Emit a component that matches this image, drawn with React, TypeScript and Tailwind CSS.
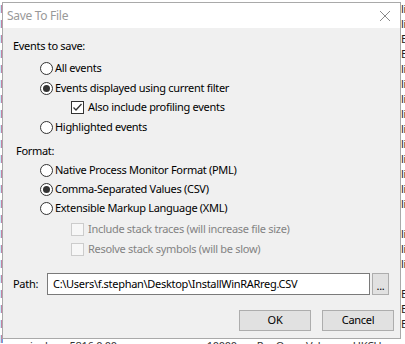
import React from "react";

const font = { fontFamily: '"Noto Sans", "Segoe UI", Arial, sans-serif' };

function Radio({ checked }: { checked?: boolean }) {
  return (
    <span className="flex h-[13px] w-[13px] shrink-0 items-center justify-center rounded-full border border-[#333333] bg-white">
      {checked && <span className="h-[7px] w-[7px] rounded-full bg-[#333333]" />}
    </span>
  );
}

function Check({ checked, disabled }: { checked?: boolean; disabled?: boolean }) {
  return (
    <span
      className={
        disabled
          ? "flex h-[13px] w-[13px] shrink-0 items-center justify-center border border-[#cccccc] bg-[#f7f7f7]"
          : "flex h-[13px] w-[13px] shrink-0 items-center justify-center border border-[#333333] bg-white"
      }
    >
      {checked && (
        <svg width="11" height="11" viewBox="0 0 11 11">
          <path d="M1.5 5.5 L4 8 L9.5 2" fill="none" stroke="#333333" strokeWidth="1.3" />
        </svg>
      )}
    </span>
  );
}

const rightBits = ["li", "li", "E", "E", "li", "li", "li", "li", "li", "li", "li", "li", "li", "li", "", "li", "li", "li", "", "E", "E", "E", ""];

export default function App() {
  return (
    <div className="relative h-[344px] w-[405px] overflow-hidden bg-white text-[11px] tracking-[-0.3px] text-black" style={font}>
      {/* background list behind dialog */}
      <div className="flex flex-col pt-[1px]">
        {rightBits.map((r, i) => (
          <div key={i} className="flex h-[15px] items-center justify-between leading-[15px]">
            <div className="flex w-[3px] justify-end overflow-hidden">
              <span className="text-[#2b2b8f]">ll</span>
            </div>
            <div className="w-[4px] overflow-hidden whitespace-nowrap text-[#222]">{r}</div>
          </div>
        ))}
      </div>
      <div className="absolute left-[30px] top-[338px] whitespace-nowrap text-[11px] text-[#333]">
        inal.exe 5816.0.00
        <span className="ml-[90px]">10000</span>
        <span className="ml-[20px]">RegQueryValue</span>
        <span className="ml-[20px]">HKCU</span>
      </div>

      {/* dialog */}
      <div className="absolute left-[2px] top-[2px] flex h-[337px] w-[399px] flex-col border border-[#a9a9a9] bg-[#f0f0f0]">
        <div className="flex h-[25px] items-center justify-between bg-white pl-[4px] pr-[7px]">
          <span className="text-[12px] text-[#999999]">Save To File</span>
          <svg width="12" height="12" viewBox="0 0 12 12" className="mr-[2px]">
            <path d="M1 1 L11 11 M11 1 L1 11" stroke="#8a8a8a" strokeWidth="1" />
          </svg>
        </div>

        <div className="flex flex-col pl-[10px]">
          <div className="mt-[8px] flex h-[20px] items-center">Events to save:</div>

          <div className="mt-[3px] flex h-[19px] items-center gap-[2px] pl-[27px]">
            <Radio />
            <span>All events</span>
          </div>
          <div className="flex h-[20px] items-center gap-[2px] pl-[27px]">
            <Radio checked />
            <span>Events displayed using current filter</span>
          </div>
          <div className="flex h-[19px] items-center gap-[4px] pl-[58px]">
            <Check checked />
            <span>Also include profiling events</span>
          </div>
          <div className="flex h-[20px] items-center gap-[2px] pl-[27px]">
            <Radio />
            <span>Highlighted events</span>
          </div>

          <div className="mt-[4px] flex h-[20px] items-center pl-[3px]">Format:</div>

          <div className="flex h-[19px] items-center gap-[2px] pl-[27px]">
            <Radio />
            <span>Native Process Monitor Format (PML)</span>
          </div>
          <div className="flex h-[19px] items-center gap-[2px] pl-[27px]">
            <Radio checked />
            <span>Comma-Separated Values (CSV)</span>
          </div>
          <div className="flex h-[19px] items-center gap-[2px] pl-[27px]">
            <Radio />
            <span>Extensible Markup Language (XML)</span>
          </div>
          <div className="mt-[1px] flex h-[20px] items-center gap-[4px] pl-[58px] text-[#838383]">
            <Check disabled />
            <span>Include stack traces (will increase file size)</span>
          </div>
          <div className="flex h-[20px] items-center gap-[4px] pl-[58px] text-[#838383]">
            <Check disabled />
            <span>Resolve stack symbols (will be slow)</span>
          </div>

          <div className="mt-[14px] flex h-[22px] items-center">
            <span className="w-[34px]">Path:</span>
            <div className="flex h-[22px] w-[323px] items-center whitespace-nowrap border border-[#7a7a7a] bg-white pl-[5px]">
              C:\Users\f.stephan\Desktop\InstallWinRARreg.CSV
            </div>
            <div className="ml-[2px] flex h-[22px] w-[17px] items-end justify-center border border-[#adadad] bg-[#e1e1e1] pb-[3px] leading-none">
              ...
            </div>
          </div>

          <div className="mt-[15px] flex justify-end gap-[11px] pr-[6px]">
            <button className="flex h-[21px] w-[72px] items-center justify-center border border-[#adadad] bg-[#e1e1e1]">
              OK
            </button>
            <button className="flex h-[21px] w-[72px] items-center justify-center border border-[#adadad] bg-[#e1e1e1]">
              Cancel
            </button>
          </div>
        </div>
      </div>
    </div>
  );
}
